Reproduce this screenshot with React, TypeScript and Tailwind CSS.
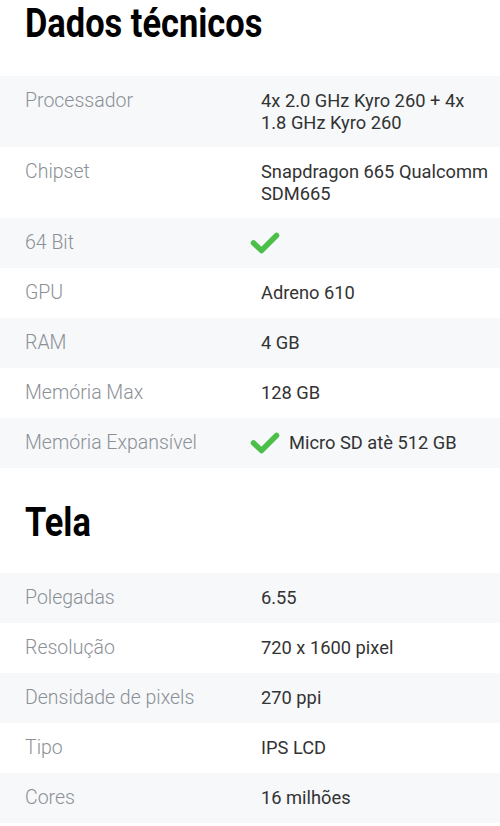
import React from 'react';

type Row = { label: string; value?: string; check?: boolean };

const tech: Row[] = [
  { label: 'Processador', value: '4x 2.0 GHz Kyro 260 + 4x 1.8 GHz Kyro 260' },
  { label: 'Chipset', value: 'Snapdragon 665 Qualcomm SDM665' },
  { label: '64 Bit', check: true },
  { label: 'GPU', value: 'Adreno 610' },
  { label: 'RAM', value: '4 GB' },
  { label: 'Memória Max', value: '128 GB' },
  { label: 'Memória Expansível', value: 'Micro SD atè 512 GB', check: true },
];

const tela: Row[] = [
  { label: 'Polegadas', value: '6.55' },
  { label: 'Resolução', value: '720 x 1600 pixel' },
  { label: 'Densidade de pixels', value: '270 ppi' },
  { label: 'Tipo', value: 'IPS LCD' },
  { label: 'Cores', value: '16 milhões' },
];

function Check() {
  return (
    <svg className="w-[30px] h-[22px] shrink-0" viewBox="0 0 30 22" fill="none">
      <path d="M3.5 11 L11.5 18.5 L26.5 3.5" stroke="#4cbf4a" strokeWidth="5.5" strokeLinecap="round" strokeLinejoin="round" />
    </svg>
  );
}

function SpecTable({ rows }: { rows: Row[] }) {
  return (
    <div>
      {rows.map((row, i) => (
        <div
          key={row.label}
          className={`flex min-h-[50px] pt-[14px] pb-[13px] leading-[22px] ${i % 2 === 0 ? 'bg-[#f6f8fa]' : 'bg-white'}`}
        >
          <div className="w-[261px] shrink-0 pl-[25px] text-[19.5px] font-light text-[#8b9096]">{row.label}</div>
          <div className="flex-1 pr-[10px] text-[18.3px] text-[#333]">
            {row.check ? (
              <div className="flex items-center gap-[9px] -ml-[11px] h-[22px]">
                <Check />
                {row.value && <span>{row.value}</span>}
              </div>
            ) : (
              row.value
            )}
          </div>
        </div>
      ))}
    </div>
  );
}

function Heading({ children, className }: { children: React.ReactNode; className: string }) {
  return (
    <h2 className={`pl-[25px] text-[40px] font-bold leading-[46px] text-black ${className}`}>
      <span className="inline-block origin-left scale-x-[0.86]">{children}</span>
    </h2>
  );
}

export default function App() {
  return (
    <div className="w-[500px] h-[826px] bg-white overflow-hidden" style={{ fontFamily: 'Roboto, "Noto Sans", sans-serif' }}>
      <Heading className="pt-[1px] h-[76px]">Dados técnicos</Heading>
      <SpecTable rows={tech} />
      <Heading className="pt-[32px] h-[105px]">Tela</Heading>
      <SpecTable rows={tela} />
    </div>
  );
}
